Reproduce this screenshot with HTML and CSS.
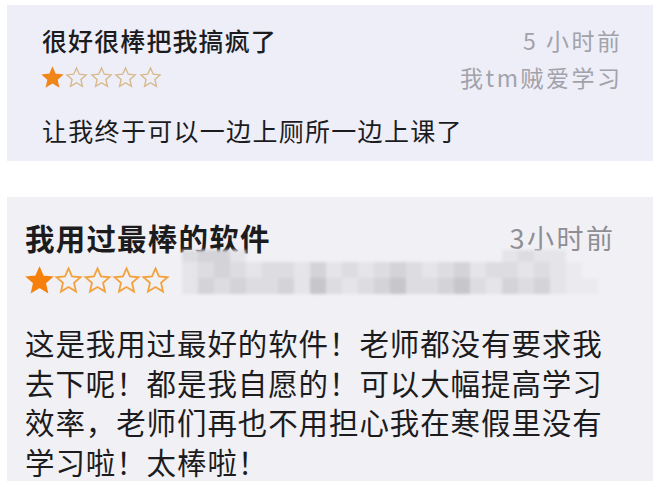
FILE: index.html
```html
<!DOCTYPE html>
<html lang="zh-CN">
<head>
  <meta charset="UTF-8">
  <title>评价</title>
  <link rel="stylesheet" href="styles.css">
</head>
<body>

  <div class="page">

    <div class="review review-a">
      <div class="head">
        <div class="head-left">
          <div class="title">很好很棒把我搞疯了</div>
          <div class="stars">
            <svg class="star full" viewBox="0 0 24 24"><polygon points="12,2 14.9,8.6 22,9.3 16.6,14 18.2,21.2 12,17.4 5.8,21.2 7.4,14 2,9.3 9.1,8.6"/></svg>
            <svg class="star" viewBox="0 0 24 24"><polygon points="12,2 14.9,8.6 22,9.3 16.6,14 18.2,21.2 12,17.4 5.8,21.2 7.4,14 2,9.3 9.1,8.6"/></svg>
            <svg class="star" viewBox="0 0 24 24"><polygon points="12,2 14.9,8.6 22,9.3 16.6,14 18.2,21.2 12,17.4 5.8,21.2 7.4,14 2,9.3 9.1,8.6"/></svg>
            <svg class="star" viewBox="0 0 24 24"><polygon points="12,2 14.9,8.6 22,9.3 16.6,14 18.2,21.2 12,17.4 5.8,21.2 7.4,14 2,9.3 9.1,8.6"/></svg>
            <svg class="star" viewBox="0 0 24 24"><polygon points="12,2 14.9,8.6 22,9.3 16.6,14 18.2,21.2 12,17.4 5.8,21.2 7.4,14 2,9.3 9.1,8.6"/></svg>
          </div>
        </div>
        <div class="head-right">
          <div class="time">5 小时前</div>
          <div class="author">我tm贼爱学习</div>
        </div>
      </div>
      <p class="text">让我终于可以一边上厕所一边上课了</p>
    </div>

    <div class="review review-b">
      <div class="head">
        <div class="title">我用过最棒的软件</div>
        <div class="time">3小时前</div>
      </div>
      <div class="stars">
        <svg class="star full" viewBox="0 0 24 24"><polygon points="12,2 14.9,8.6 22,9.3 16.6,14 18.2,21.2 12,17.4 5.8,21.2 7.4,14 2,9.3 9.1,8.6"/></svg>
        <svg class="star" viewBox="0 0 24 24"><polygon points="12,2 14.9,8.6 22,9.3 16.6,14 18.2,21.2 12,17.4 5.8,21.2 7.4,14 2,9.3 9.1,8.6"/></svg>
        <svg class="star" viewBox="0 0 24 24"><polygon points="12,2 14.9,8.6 22,9.3 16.6,14 18.2,21.2 12,17.4 5.8,21.2 7.4,14 2,9.3 9.1,8.6"/></svg>
        <svg class="star" viewBox="0 0 24 24"><polygon points="12,2 14.9,8.6 22,9.3 16.6,14 18.2,21.2 12,17.4 5.8,21.2 7.4,14 2,9.3 9.1,8.6"/></svg>
        <svg class="star" viewBox="0 0 24 24"><polygon points="12,2 14.9,8.6 22,9.3 16.6,14 18.2,21.2 12,17.4 5.8,21.2 7.4,14 2,9.3 9.1,8.6"/></svg>

        <!-- blurred-out user name -->
        <div class="mosaic">
          <i class="g2"></i><i class="g1"></i><i class="g1"></i><i class="g3"></i><i></i><i></i><i></i><i></i><i></i><i></i><i></i><i></i><i></i><i></i><i></i><i></i><i></i><i></i><i></i><i></i><i class="g3"></i><i class="g2"></i><i class="g3"></i><i class="g3"></i><i></i><i></i>
          <i class="g3"></i><i class="g2"></i><i class="g1"></i><i class="g2"></i><i class="g3"></i><i class="g2"></i><i class="g2"></i><i class="g3"></i><i class="g1"></i><i class="g3"></i><i class="g2"></i><i class="g3"></i><i class="g2"></i><i class="g1"></i><i class="g2"></i><i class="g3"></i><i class="g2"></i><i class="g1"></i><i class="g3"></i><i class="g2"></i><i class="g2"></i><i class="g3"></i><i class="g2"></i><i class="g3"></i><i class="g4"></i><i></i>
          <i class="g3"></i><i class="g1"></i><i class="g2"></i><i class="g1"></i><i class="g2"></i><i class="g2"></i><i class="g1"></i><i class="g3"></i><i class="g0"></i><i class="g2"></i><i class="g3"></i><i class="g2"></i><i class="g1"></i><i class="g0"></i><i class="g2"></i><i class="g2"></i><i class="g1"></i><i class="g0"></i><i class="g2"></i><i class="g3"></i><i class="g1"></i><i class="g2"></i><i class="g1"></i><i class="g3"></i><i class="g4"></i><i class="g4"></i>
        </div>
      </div>
      <p class="text">这是我用过最好的软件！老师都没有要求我去下呢！都是我自愿的！可以大幅提高学习效率，老师们再也不用担心我在寒假里没有学习啦！太棒啦！</p>
    </div>

  </div>

</body>
</html>
```

FILE: styles.css
```css
body {
  margin: 0;
  padding: 0;
  background: #ffffff;
  font-family: "Noto Sans CJK SC", "Noto Sans", sans-serif;
  color: #1c1c1e;
}

.page {
  display: flex;
  flex-direction: column;
  gap: 36px;
  padding: 5px 4px 0 7px;
}

.review {
  width: 646px;
  box-sizing: border-box;
}

/* first review */

.review-a {
  background: #eeeef8;
  padding: 17px 33px 13px 35px;
}

.review-a .head {
  display: flex;
  justify-content: space-between;
}

.review-a .title {
  font-size: 25px;
  line-height: 36px;
  letter-spacing: 1.1px;
  font-weight: 500;
}

.review-a .stars {
  height: 38px;
  gap: 1.4px;
  margin-left: -1px;
}

.review-a .star {
  width: 23px;
  height: 23px;
}

.review-a .star polygon {
  fill: none;
  stroke: #d6b889;
  stroke-width: 1.4;
}

.review-a .star.full polygon {
  fill: #f08518;
  stroke: #f08518;
}

.head-right {
  text-align: right;
  color: #a2a2aa;
  font-size: 23px;
  letter-spacing: 2.5px;
  margin-right: -2.5px;
}

.head-right .time {
  line-height: 36px;
}

.head-right .author {
  line-height: 38px;
}

.review-a .text {
  margin: 16px 0 0;
  font-size: 25px;
  line-height: 36px;
  letter-spacing: 1.3px;
}

/* second review */

.review-b {
  background: #f1f0f5;
  padding: 20px 40px 0 18px;
}

.review-b .head {
  display: flex;
  justify-content: space-between;
  align-items: center;
  height: 40px;
}

.review-b .title {
  font-size: 29.5px;
  font-weight: 700;
  letter-spacing: 1.2px;
}

.review-b .time {
  font-size: 27px;
  color: #8e8e94;
  letter-spacing: 2.5px;
  margin-right: -2.5px;
}

.stars {
  display: flex;
  align-items: center;
}

.review-b .stars {
  height: 46px;
  gap: 0;
}

.review-b .star {
  width: 29px;
  height: 29px;
}

.review-b .star polygon {
  fill: none;
  stroke: #f2a23c;
  stroke-width: 1.5;
}

.review-b .star.full polygon {
  fill: #f5800c;
  stroke: #f5800c;
}

.mosaic {
  display: grid;
  grid-template-columns: repeat(26, 16px);
  grid-template-rows: 12px 16px 16px;
  align-self: flex-start;
  margin: -7px 0 0 12px;
  filter: blur(1.6px);
}

.mosaic i {
  display: block;
}

.mosaic .g0 { background: #c6c6cb; }
.mosaic .g1 { background: #d3d3d8; }
.mosaic .g2 { background: #dddde1; }
.mosaic .g3 { background: #e5e5e9; }
.mosaic .g4 { background: #ebebef; }

.review-b .text {
  margin: 20px 0 0;
  font-size: 29.5px;
  line-height: 39.5px;
  letter-spacing: 0.9px;
}
```
